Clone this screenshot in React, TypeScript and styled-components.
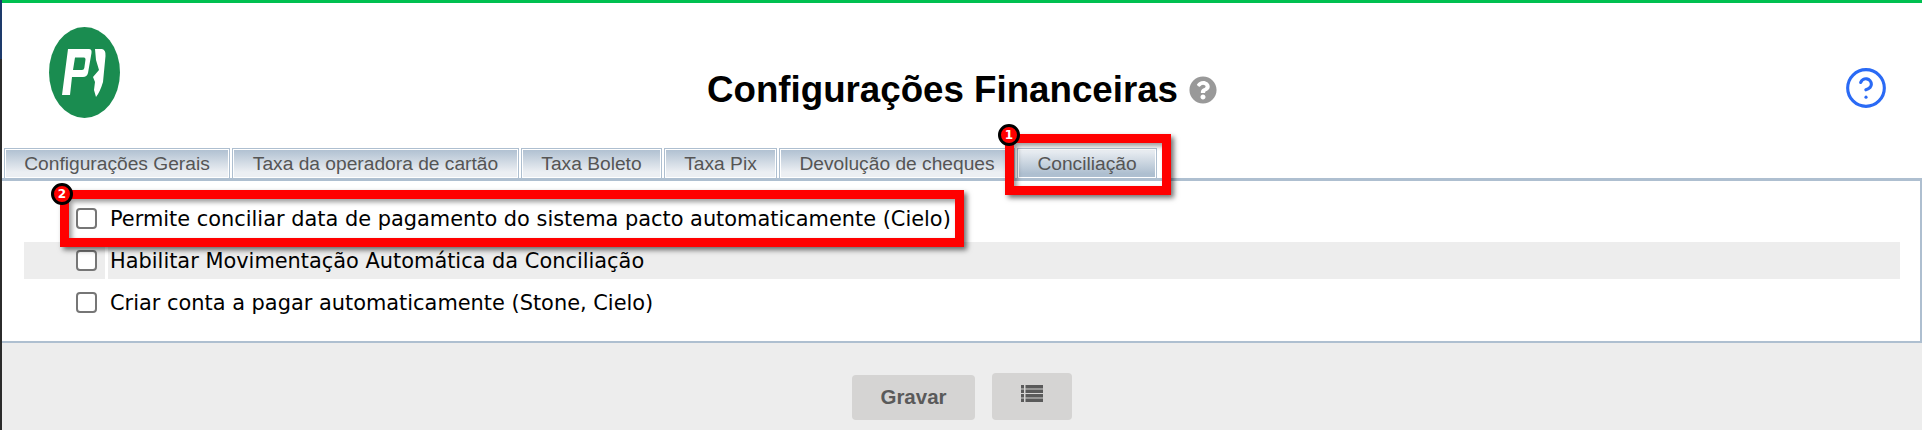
import React from 'react';
import styled, { createGlobalStyle } from 'styled-components';
import { FaQuestionCircle } from 'react-icons/fa';
import { CircleHelp } from 'lucide-react';

const GlobalStyle = createGlobalStyle`
  html, body {
    margin: 0;
    padding: 0;
    background: #ededed;
  }
  * {
    box-sizing: border-box;
  }
`;

const Page = styled.div`
  position: relative;
  width: 1922px;
  height: 430px;
  overflow: hidden;
  display: flex;
  flex-direction: column;
  background: #ededed;
  border-left: 2px solid;
  border-image: linear-gradient(to bottom, #1d3a6b 60px, #2b2b2b 60px) 1;
  font-family: "Liberation Sans", Arial, sans-serif;
`;

const TopBar = styled.div`
  height: 3px;
  flex: none;
  background: #00c050;
`;

const Header = styled.header`
  height: 143px;
  flex: none;
  display: grid;
  grid-template-columns: 1fr auto 1fr;
  background: #fff;
`;

const LogoBox = styled.div`
  padding: 24px 0 0 47px;
`;

const TitleRow = styled.div`
  display: flex;
  align-items: center;
  align-self: start;
  gap: 11px;
  padding: 67px 0 0 0;
`;

const Title = styled.h1`
  margin: 0;
  font-size: 36.7px;
  font-weight: 700;
  line-height: 40px;
  color: #000;
`;

const TitleHint = styled(FaQuestionCircle)`
  width: 28px;
  height: 28px;
  color: #999;
`;

const HelpBox = styled.div`
  display: flex;
  justify-content: flex-end;
  padding: 63px 34px 0 0;
  color: #2a6af5;
`;

const TabStrip = styled.nav`
  height: 35px;
  flex: none;
  display: flex;
  gap: 2px;
  padding: 2px 0 0 2px;
  background: #fff;
  border-bottom: 3px solid #aebfd0;
`;

const Tab = styled.div<{ $active?: boolean; $width: number }>`
  width: ${(p) => p.$width}px;
  display: flex;
  align-items: center;
  justify-content: center;
  border: 1px solid #aebfd0;
  border-bottom: 0;
  box-shadow: inset 0 0 0 1px #fff;
  background: ${(p) =>
    p.$active
      ? 'linear-gradient(to bottom, #eef1f5, #aebfd0 85%)'
      : 'linear-gradient(to bottom, #aebfd0, #eceff3 80%)'};
  font-size: 19.2px;
  color: #555;
`;

const Panel = styled.section`
  height: 162px;
  flex: none;
  display: flex;
  flex-direction: column;
  gap: 5px;
  padding: 19px 20px 0 22px;
  background: #fff;
  border-right: 2px solid #aebfd0;
  border-bottom: 2px solid #aebfd0;
`;

const Row = styled.label`
  display: grid;
  grid-template-columns: 81px 1fr;
  column-gap: 3px;
  height: 37px;
`;

const CheckCell = styled.div<{ $shaded?: boolean }>`
  display: flex;
  align-items: center;
  padding-left: 52px;
  background: ${(p) => (p.$shaded ? '#ededed' : 'transparent')};
`;

const CheckBox = styled.span`
  display: block;
  width: 21px;
  height: 21px;
  background: #fff;
  border: 2px solid #767676;
  border-radius: 4px;
`;

const RowLabel = styled.div<{ $shaded?: boolean }>`
  display: flex;
  align-items: center;
  padding-left: 2px;
  background: ${(p) => (p.$shaded ? '#ededed' : 'transparent')};
  font-family: "DejaVu Sans", Verdana, sans-serif;
  font-size: 20.9px;
  color: #000;
`;

const Footer = styled.footer`
  display: flex;
  justify-content: center;
  align-items: flex-end;
  gap: 17px;
  height: 77px;
`;

const SaveButton = styled.button`
  width: 123px;
  height: 45px;
  padding: 0 0 2px;
  border: 0;
  border-radius: 4px;
  background: #d5d4d3;
  font: 700 20.5px "Liberation Sans", Arial, sans-serif;
  color: #5a5a5a;
`;

const ListButton = styled.button`
  width: 80px;
  height: 47px;
  padding: 0 0 6px;
  border: 0;
  border-radius: 4px;
  background: #d5d4d3;
  color: #5a5a5a;

  svg {
    display: block;
    margin: 0 auto;
  }
`;

const RedBox = styled.div<{ $x: number; $y: number; $w: number; $h: number }>`
  position: absolute;
  left: ${(p) => p.$x - 2}px;
  top: ${(p) => p.$y}px;
  width: ${(p) => p.$w}px;
  height: ${(p) => p.$h}px;
  border: 9px solid #f00;
  box-shadow: 3px 3px 5px rgba(0, 0, 0, 0.55), inset 3px 3px 5px rgba(0, 0, 0, 0.4);
`;

const Badge = styled.div<{ $x: number; $y: number }>`
  position: absolute;
  left: ${(p) => p.$x - 13}px;
  top: ${(p) => p.$y - 11}px;
  width: 22px;
  height: 22px;
  display: flex;
  align-items: center;
  justify-content: center;
  border-radius: 50%;
  border: 3px solid #000;
  background: #f00;
  font: 700 12px "DejaVu Sans", sans-serif;
  color: #fff;
`;

const tabs = [
  { label: 'Configurações Gerais', width: 226 },
  { label: 'Taxa da operadora de cartão', width: 287 },
  { label: 'Taxa Boleto', width: 141 },
  { label: 'Taxa Pix', width: 113 },
  { label: 'Devolução de cheques', width: 236 },
];

const options = [
  { label: 'Permite conciliar data de pagamento do sistema pacto automaticamente (Cielo)' },
  { label: 'Habilitar Movimentação Automática da Conciliação', shaded: true },
  { label: 'Criar conta a pagar automaticamente (Stone, Cielo)' },
];

const Logo: React.FC = () => (
  <svg width="71" height="91" viewBox="9 7 71 91">
    <ellipse cx="44.5" cy="52.5" rx="35.5" ry="45.5" fill="#1a8c50" />
    <path
      fill="#fff"
      fillRule="evenodd"
      d="M28 29 H49 Q52 29 51.5 33 L48 53 Q47 57 43 57 H32 L30 75 H22 Z M35 37.5 L33 50 H42 Q44 50 44.3 48 L45.5 39.5 Q45.5 37.5 44 37.5 Z"
    />
    <path
      fill="#fff"
      d="M55 29 H62 Q66 30 65.5 36 L63 62 Q60 72 56 77 L54 70 L55 62 L53 57 L59 50 L56 40 Z"
    />
  </svg>
);

const ListIcon: React.FC = () => (
  <svg width="22" height="17" viewBox="0 0 22 17" fill="currentColor">
    {[0, 4.5, 9, 13.5].map((y) => (
      <React.Fragment key={y}>
        <rect x="0" y={y} width="3" height="3.5" />
        <rect x="4.5" y={y} width="17.5" height="3.5" />
      </React.Fragment>
    ))}
  </svg>
);

const App: React.FC = () => {
  return (
    <Page>
      <GlobalStyle />
      <TopBar />
      <Header>
        <LogoBox>
          <Logo />
        </LogoBox>
        <TitleRow>
          <Title>Configurações Financeiras</Title>
          <TitleHint />
        </TitleRow>
        <HelpBox>
          <CircleHelp size={44} strokeWidth={1.7} />
        </HelpBox>
      </Header>
      <TabStrip>
        {tabs.map((tab) => (
          <Tab key={tab.label} $width={tab.width}>
            {tab.label}
          </Tab>
        ))}
        <Tab $active $width={140}>
          Conciliação
        </Tab>
      </TabStrip>
      <Panel>
        {options.map((option) => (
          <Row key={option.label}>
            <CheckCell $shaded={option.shaded}>
              <CheckBox />
            </CheckCell>
            <RowLabel $shaded={option.shaded}>{option.label}</RowLabel>
          </Row>
        ))}
      </Panel>
      <Footer>
        <SaveButton>Gravar</SaveButton>
        <ListButton>
          <ListIcon />
        </ListButton>
      </Footer>
      <RedBox $x={1005} $y={134} $w={166} $h={61} />
      <Badge $x={1009} $y={135}>1</Badge>
      <RedBox $x={60} $y={190} $w={904} $h={57} />
      <Badge $x={62} $y={194}>2</Badge>
    </Page>
  );
};

export default App;
